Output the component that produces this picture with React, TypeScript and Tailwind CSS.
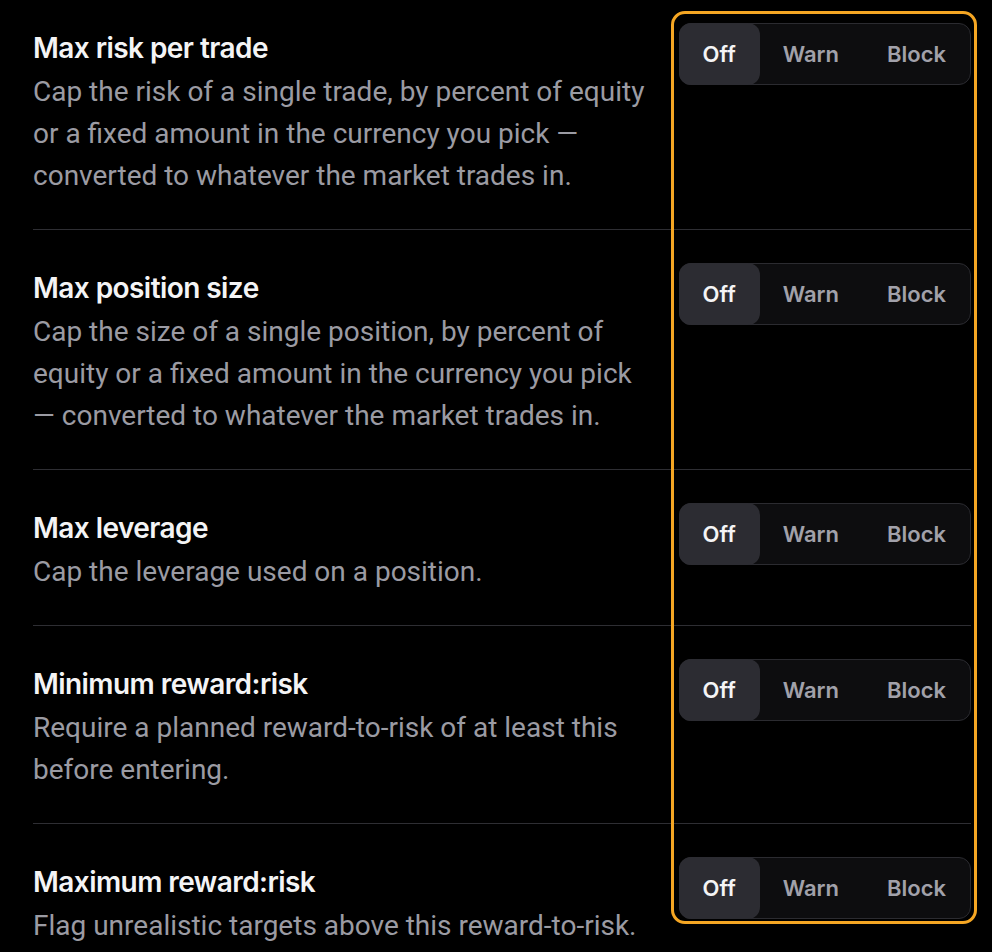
import React from "react";

type Rule = { title: string; desc: string };

const rules: Rule[] = [
  {
    title: "Max risk per trade",
    desc: "Cap the risk of a single trade, by percent of equity or a fixed amount in the currency you pick — converted to whatever the market trades in.",
  },
  {
    title: "Max position size",
    desc: "Cap the size of a single position, by percent of equity or a fixed amount in the currency you pick — converted to whatever the market trades in.",
  },
  {
    title: "Max leverage",
    desc: "Cap the leverage used on a position.",
  },
  {
    title: "Minimum reward:risk",
    desc: "Require a planned reward-to-risk of at least this before entering.",
  },
  {
    title: "Maximum reward:risk",
    desc: "Flag unrealistic targets above this reward-to-risk.",
  },
];

function Segmented() {
  return (
    <div className="flex h-[62px] shrink-0 items-stretch rounded-[12px] border border-[#2b2b30] bg-[#0d0d0f] font-['Inter',sans-serif] text-[22px] font-semibold">
      <div className="-m-px flex items-center rounded-[12px] bg-[#2c2c32] px-6 text-[#f4f4f5]">
        Off
      </div>
      <div className="flex items-center px-6 text-[#a1a1aa]">Warn</div>
      <div className="flex items-center px-6 text-[#a1a1aa]">Block</div>
    </div>
  );
}

export default function App() {
  return (
    <div className="relative min-h-[952px] w-[992px] overflow-hidden bg-black pl-[33px] pr-[21px]">
      <div className="flex flex-col">
        {rules.map((r, i) => (
          <div
            key={r.title}
            className={
              "flex items-start justify-between gap-6 pb-[32px] " +
              (i === 0 ? "pt-[23px]" : "border-t border-[#2e2e33] pt-[33px]")
            }
          >
            <div className="w-[622px] min-w-0">
              <div className="flex h-[46px] items-center pt-[3px] font-['Inter',sans-serif] text-[28px] font-semibold tracking-[-0.02em] text-[#f4f4f5]">
                {r.title}
              </div>
              <p className="mt-[2px] font-['Roboto',sans-serif] text-[28px] leading-[42px] text-[#9b9ba3]">
                {r.desc}
              </p>
            </div>
            <Segmented />
          </div>
        ))}
      </div>
      <div className="pointer-events-none absolute left-[671px] top-[11px] h-[913px] w-[306px] rounded-[14px] border-[3px] border-[#f5a623]" />
    </div>
  );
}
